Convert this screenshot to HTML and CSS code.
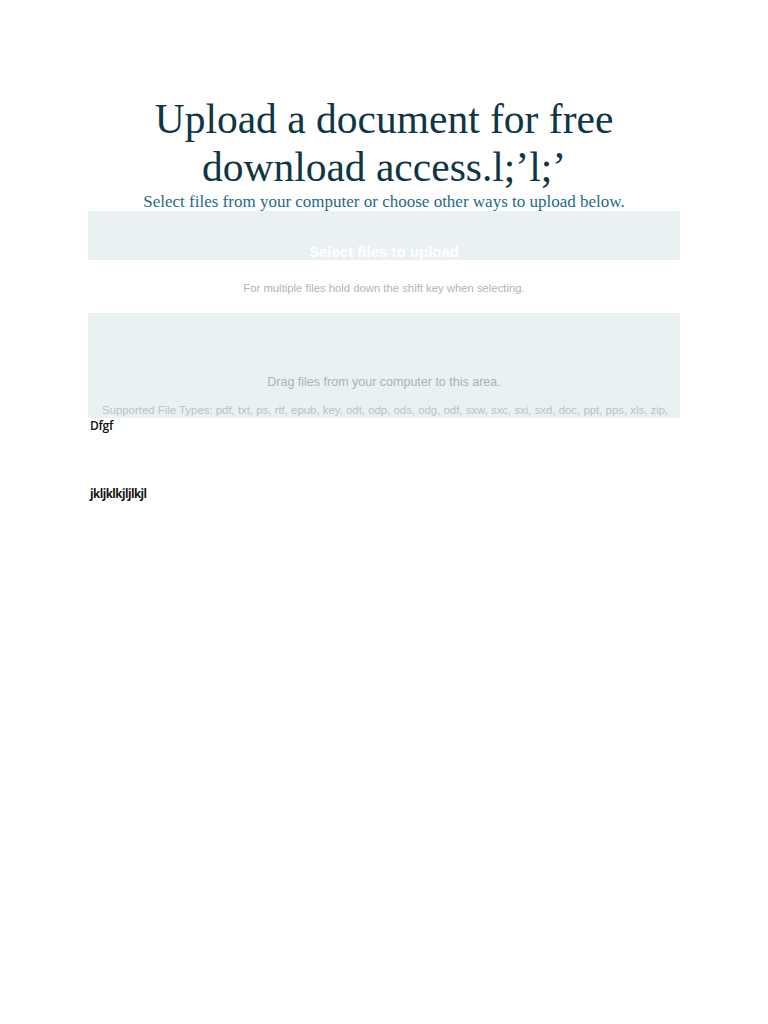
FILE: index.html
```html
<!DOCTYPE html>
<html>
<head>
<meta charset="utf-8">
<link rel="stylesheet" href="styles.css">
</head>
<body>
<div class="page">
  <h1 class="title">Upload a document for free download access.l;’l;’</h1>
  <p class="subtitle">Select files from your computer or choose other ways to upload below.</p>
  <div class="select-box">
    <div class="select-label">Select files to upload</div>
  </div>
  <p class="hint">For multiple files hold down the shift key when selecting.</p>
  <div class="drop-box">
    <div class="drop-label">Drag files from your computer to this area.</div>
    <div class="types">Supported File Types: pdf, txt, ps, rtf, epub, key, odt, odp, ods, odg, odf, sxw, sxc, sxi, sxd, doc, ppt, pps, xls, zip,</div>
  </div>
  <p class="note">Dfgf</p>
  <p class="note bold">jkljklkjljlkjl</p>
</div>
</body>
</html>
```
FILE: styles.css
```css
html, body { margin: 0; padding: 0; background: #fff; }
.page { width: 592px; margin: 0 auto; padding-top: 95px; }
.title {
  margin: 0;
  font-family: "Liberation Serif", serif;
  font-weight: normal;
  font-size: 41.5px;
  line-height: 48px;
  color: #0e3645;
  text-align: center;
  padding: 0 40px;
}
.subtitle {
  margin: 2px 0 0;
  font-family: "Liberation Serif", serif;
  font-size: 17px;
  line-height: 18px;
  color: #1e6b85;
  text-align: center;
}
.select-box {
  height: 49px;
  background: #e9f1f3;
  position: relative;
}
.select-label {
  position: absolute;
  left: 0; right: 0; top: 32px;
  text-align: center;
  font-family: "Liberation Sans", Arial, sans-serif;
  font-weight: bold;
  font-size: 15px;
  line-height: 17px;
  color: #fff;
}
.hint {
  margin: 0;
  padding: 22px 0 18px;
  text-align: center;
  font-family: "Liberation Sans", Arial, sans-serif;
  font-size: 11.3px;
  line-height: 13px;
  color: #b3b3b3;
}
.drop-box {
  height: 105px;
  background: #e9f1f3;
  overflow: hidden;
  box-sizing: border-box;
  padding-top: 62px;
}
.drop-label {
  text-align: center;
  font-family: "Liberation Sans", Arial, sans-serif;
  font-size: 12.5px;
  line-height: 14px;
  color: #a9b2b6;
}
.types {
  margin-top: 14px;
  padding: 0 14px;
  font-family: "Liberation Sans", Arial, sans-serif;
  font-size: 11.4px;
  line-height: 14px;
  color: #b8c2c6;
  white-space: nowrap;
}
.note {
  margin: 0;
  padding-left: 2px;
  font-family: "Open Sans", sans-serif;
  font-size: 12px;
  line-height: 16px;
  color: #111;
  font-weight: 600;
  letter-spacing: -0.3px;
}
.note.bold { font-weight: bold; margin-top: 52px; font-size: 11.5px; letter-spacing: -0.5px; }
```
